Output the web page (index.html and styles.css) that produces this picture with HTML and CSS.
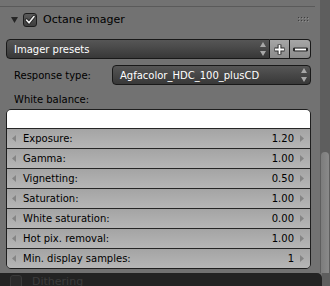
FILE: index.html
```html
<!DOCTYPE html>
<html lang="en">
<head>
    <meta charset="UTF-8">
    <title>Octane imager</title>
    <link rel="stylesheet" href="styles.css">
</head>
<body>
<div class="editor">
    <div class="region">
        <div class="panel">
            <div class="panel-head">
                <svg class="disclosure" width="7" height="7" viewBox="0 0 7 7"><polygon points="0,1 7,1 3.5,7" fill="#262626"/></svg>
                <span class="check">
                    <svg width="12" height="12" viewBox="0 0 12 12"><polyline points="2.5,6 5,8.8 10,2.5" fill="none" stroke="#222" stroke-width="3.4" stroke-linecap="round" stroke-linejoin="round"/><polyline points="2.5,6 5,8.8 10,2.5" fill="none" stroke="#f0f0f0" stroke-width="1.6" stroke-linecap="round" stroke-linejoin="round"/></svg>
                </span>
                <span class="title">Octane imager</span>
                <svg class="grip" width="11" height="5" viewBox="0 0 11 5">
                    <g fill="#8c8c8c"><rect x="1" y="1" width="1" height="1"/><rect x="4" y="1" width="1" height="1"/><rect x="7" y="1" width="1" height="1"/><rect x="10" y="1" width="1" height="1"/><rect x="1" y="4" width="1" height="1"/><rect x="4" y="4" width="1" height="1"/><rect x="7" y="4" width="1" height="1"/><rect x="10" y="4" width="1" height="1"/></g>
                    <g fill="#3e3e3e"><rect x="0" y="0" width="1" height="1"/><rect x="3" y="0" width="1" height="1"/><rect x="6" y="0" width="1" height="1"/><rect x="9" y="0" width="1" height="1"/><rect x="0" y="3" width="1" height="1"/><rect x="3" y="3" width="1" height="1"/><rect x="6" y="3" width="1" height="1"/><rect x="9" y="3" width="1" height="1"/></g>
                </svg>
            </div>
            <div class="panel-body">
                <div class="preset-row">
                    <div class="menu preset">
                        <span>Imager presets</span>
                        <svg class="updown" width="6" height="14" viewBox="0 0 6 14"><polygon points="3,0 6,5 0,5" fill="#a8a8a8"/><polygon points="0,9 6,9 3,14" fill="#a8a8a8"/></svg>
                    </div>
                    <div class="tool add">
                        <svg width="13" height="13" viewBox="0 0 13 13"><path d="M6.5 1.5v10M1.5 6.5h10" stroke="#2a2a2a" stroke-width="3.8"/><path d="M6.5 2v9M2 6.5h9" stroke="#fff" stroke-width="1.8"/></svg>
                    </div>
                    <div class="tool remove">
                        <svg width="15" height="13" viewBox="0 0 15 13"><path d="M1.5 6.5h12" stroke="#2a2a2a" stroke-width="3.8" stroke-linecap="round"/><path d="M2 6.5h11" stroke="#fff" stroke-width="1.8"/></svg>
                    </div>
                </div>
                <div class="prop-row">
                    <span class="label">Response type:</span>
                    <div class="menu response">
                        <span>Agfacolor_HDC_100_plusCD</span>
                        <svg class="updown" width="6" height="14" viewBox="0 0 6 14"><polygon points="3,0 6,5 0,5" fill="#a8a8a8"/><polygon points="0,9 6,9 3,14" fill="#a8a8a8"/></svg>
                    </div>
                </div>
                <div class="label wb">White balance:</div>
                <div class="column">
                    <div class="swatch"></div>
                    <div class="num"><svg class="arrow" width="4" height="7" viewBox="0 0 4 7"><polygon points="4,0 4,7 0,3.5" fill="#858585"/></svg><span class="name">Exposure:</span><span class="value">1.20</span><svg class="arrow" width="4" height="7" viewBox="0 0 4 7"><polygon points="0,0 0,7 4,3.5" fill="#858585"/></svg></div>
                    <div class="num"><svg class="arrow" width="4" height="7" viewBox="0 0 4 7"><polygon points="4,0 4,7 0,3.5" fill="#858585"/></svg><span class="name">Gamma:</span><span class="value">1.00</span><svg class="arrow" width="4" height="7" viewBox="0 0 4 7"><polygon points="0,0 0,7 4,3.5" fill="#858585"/></svg></div>
                    <div class="num"><svg class="arrow" width="4" height="7" viewBox="0 0 4 7"><polygon points="4,0 4,7 0,3.5" fill="#858585"/></svg><span class="name">Vignetting:</span><span class="value">0.50</span><svg class="arrow" width="4" height="7" viewBox="0 0 4 7"><polygon points="0,0 0,7 4,3.5" fill="#858585"/></svg></div>
                    <div class="num"><svg class="arrow" width="4" height="7" viewBox="0 0 4 7"><polygon points="4,0 4,7 0,3.5" fill="#858585"/></svg><span class="name">Saturation:</span><span class="value">1.00</span><svg class="arrow" width="4" height="7" viewBox="0 0 4 7"><polygon points="0,0 0,7 4,3.5" fill="#858585"/></svg></div>
                    <div class="num"><svg class="arrow" width="4" height="7" viewBox="0 0 4 7"><polygon points="4,0 4,7 0,3.5" fill="#858585"/></svg><span class="name">White saturation:</span><span class="value">0.00</span><svg class="arrow" width="4" height="7" viewBox="0 0 4 7"><polygon points="0,0 0,7 4,3.5" fill="#858585"/></svg></div>
                    <div class="num"><svg class="arrow" width="4" height="7" viewBox="0 0 4 7"><polygon points="4,0 4,7 0,3.5" fill="#858585"/></svg><span class="name">Hot pix. removal:</span><span class="value">1.00</span><svg class="arrow" width="4" height="7" viewBox="0 0 4 7"><polygon points="0,0 0,7 4,3.5" fill="#858585"/></svg></div>
                    <div class="num"><svg class="arrow" width="4" height="7" viewBox="0 0 4 7"><polygon points="4,0 4,7 0,3.5" fill="#858585"/></svg><span class="name">Min. display samples:</span><span class="value">1</span><svg class="arrow" width="4" height="7" viewBox="0 0 4 7"><polygon points="0,0 0,7 4,3.5" fill="#858585"/></svg></div>
                </div>
            </div>
        </div>
        <div class="scroll">
            <div class="thumb"></div>
        </div>
    </div>
    <div class="next-row">
        <div class="next-panel">
            <span class="check faded"></span>
            <span class="next-title">Dithering</span>
        </div>
        <div class="filler"></div>
    </div>
</div>
</body>
</html>
```

FILE: styles.css
```css
* {
    box-sizing: border-box;
}
body {
    margin: 0;
    width: 330px;
    height: 286px;
    overflow: hidden;
    background-color: #727272;
    font-family: "DejaVu Sans", "Liberation Sans", sans-serif;
    font-size: 10px;
    color: #000;
}
.editor {
    display: flex;
    flex-direction: column;
    height: 286px;
}
.region {
    display: flex;
    height: 273px;
}
.panel {
    width: 320px;
    padding-top: 6px;
}
.panel-head {
    display: flex;
    align-items: center;
    width: 315px;
    height: 26px;
    border-top: 1px solid #5a5a5a;
    padding: 0 6px 0 11px;
}
.disclosure {
    display: block;
}
.check {
    display: flex;
    align-items: center;
    justify-content: center;
    width: 14px;
    height: 14px;
    margin-left: 5px;
    border: 1px solid #1c1c1c;
    border-radius: 3px;
    background: linear-gradient(#5a5a5a, #3e3e3e);
}
.title {
    margin-left: 6px;
    font-size: 11px;
}
.grip {
    display: block;
    margin-left: auto;
}
.panel-body {
    padding: 7px 0 0 6px;
    width: 311px;
}
.preset-row {
    display: flex;
    height: 20px;
}
.menu {
    display: flex;
    align-items: center;
    justify-content: space-between;
    height: 20px;
    padding: 0 3px 0 7px;
    border: 1px solid #191919;
    border-radius: 4px;
    background: linear-gradient(#565656, #383838);
    color: #fff;
}
.updown {
    display: block;
}
.preset {
    width: 264px;
    border-radius: 4px 0 0 4px;
}
.tool {
    display: flex;
    align-items: center;
    justify-content: center;
    width: 20px;
    height: 20px;
    border: 1px solid #191919;
    border-left: none;
    background: linear-gradient(#a6a6a6, #8a8a8a);
}
.remove {
    width: 21px;
    border-radius: 0 4px 4px 0;
}
.prop-row {
    display: flex;
    align-items: center;
    margin-top: 6px;
    height: 20px;
}
.label {
    padding-left: 8px;
}
.prop-row .label {
    width: 106px;
}
.response {
    width: 199px;
}
.wb {
    margin-top: 5px;
    height: 19px;
    line-height: 19px;
}
.column {
    width: 305px;
    border: 1px solid #1e1e1e;
    border-radius: 5px;
    overflow: hidden;
}
.swatch {
    height: 18px;
    background-color: #fff;
}
.num {
    display: flex;
    align-items: center;
    height: 20px;
    padding: 0 6px 0 5px;
    border-top: 1px solid #262626;
    background: linear-gradient(#a4a4a4, #b6b6b6);
}
.arrow {
    display: block;
}
.name {
    margin-left: 7px;
}
.value {
    margin-left: auto;
    margin-right: 6px;
}
.scroll {
    width: 10px;
    padding: 152px 1px 0 1px;
    background-color: #5e5e5e;
}
.thumb {
    height: 100%;
    border-radius: 4px 4px 0 0;
    background: linear-gradient(90deg, #7c7c7c, #8a8a8a);
}
.next-row {
    display: flex;
    height: 13px;
}
.next-panel {
    display: flex;
    align-items: flex-start;
    width: 322px;
    padding: 2px 0 0 10px;
    background-color: #232323;
    border-radius: 0 5px 0 0;
    overflow: hidden;
}
.check.faded {
    width: 12px;
    height: 14px;
    margin-left: 0;
    border-color: #3a3a3a;
    background: #2b2b2b;
}
.next-title {
    margin-left: 10px;
    font-size: 11px;
    color: #3c3c3c;
}
.filler {
    flex: 1;
    background-color: #5e5e5e;
}
```
